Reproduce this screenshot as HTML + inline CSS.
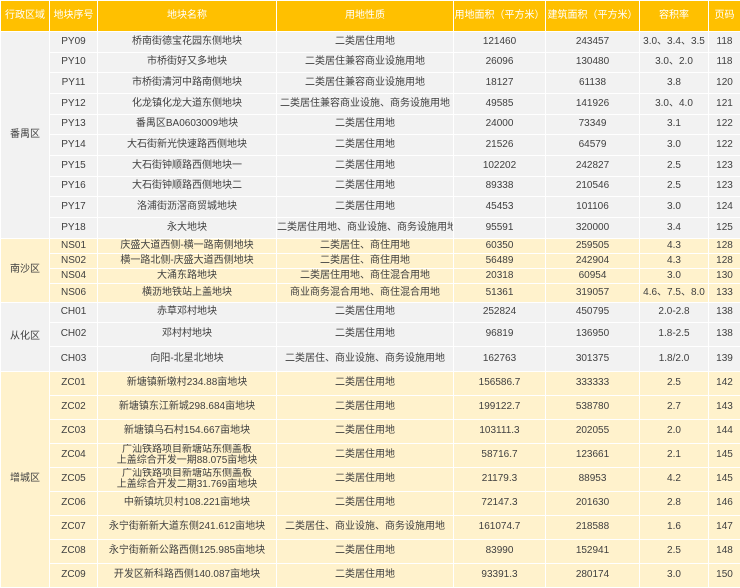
<!DOCTYPE html>
<html><head><meta charset="utf-8"><style>
body{margin:0;width:740px;height:586px;overflow:hidden;background:#fff;}
table{border-collapse:collapse;table-layout:fixed;width:740px;font-family:"Liberation Sans","Noto Sans CJK SC",sans-serif;font-size:10px;color:#404040;}
td,th{border:1px solid #fff;padding:0;text-align:center;white-space:nowrap;overflow:hidden;line-height:10.5px;}
th{background:#FFC000;color:#fff;font-weight:normal;height:30px;font-size:10px;}
.g td{background:#F2F2F2;}
.y td{background:#FFF2CC;}
</style></head><body>
<table>
<colgroup><col style="width:49px"><col style="width:48px"><col style="width:179px"><col style="width:177px"><col style="width:92px"><col style="width:94px"><col style="width:69px"><col style="width:32px"></colgroup>
<tr><th>行政区域</th><th>地块序号</th><th>地块名称</th><th>用地性质</th><th>用地面积（平方米）</th><th>建筑面积（平方米）</th><th>容积率</th><th>页码</th></tr>
<tbody class="g">
<tr style="height:21px"><td rowspan="10">番禺区</td><td>PY09</td><td>桥南街德宝花园东侧地块</td><td>二类居住用地</td><td>121460</td><td>243457</td><td>3.0、3.4、3.5</td><td>118</td></tr>
<tr style="height:20px"><td>PY10</td><td>市桥街好又多地块</td><td>二类居住兼容商业设施用地</td><td>26096</td><td>130480</td><td>3.0、2.0</td><td>118</td></tr>
<tr style="height:21px"><td>PY11</td><td>市桥街清河中路南侧地块</td><td>二类居住兼容商业设施用地</td><td>18127</td><td>61138</td><td>3.8</td><td>120</td></tr>
<tr style="height:21px"><td>PY12</td><td>化龙镇化龙大道东侧地块</td><td>二类居住兼容商业设施、商务设施用地</td><td>49585</td><td>141926</td><td>3.0、4.0</td><td>121</td></tr>
<tr style="height:20px"><td>PY13</td><td>番禺区BA0603009地块</td><td>二类居住用地</td><td>24000</td><td>73349</td><td>3.1</td><td>122</td></tr>
<tr style="height:21px"><td>PY14</td><td>大石街新光快速路西侧地块</td><td>二类居住用地</td><td>21526</td><td>64579</td><td>3.0</td><td>122</td></tr>
<tr style="height:21px"><td>PY15</td><td>大石街钟顺路西侧地块一</td><td>二类居住用地</td><td>102202</td><td>242827</td><td>2.5</td><td>123</td></tr>
<tr style="height:20px"><td>PY16</td><td>大石街钟顺路西侧地块二</td><td>二类居住用地</td><td>89338</td><td>210546</td><td>2.5</td><td>123</td></tr>
<tr style="height:21px"><td>PY17</td><td>洛浦街沥滘商贸城地块</td><td>二类居住用地</td><td>45453</td><td>101106</td><td>3.0</td><td>124</td></tr>
<tr style="height:21px"><td>PY18</td><td>永大地块</td><td>二类居住用地、商业设施、商务设施用地</td><td>95591</td><td>320000</td><td>3.4</td><td>125</td></tr>
</tbody>
<tbody class="y">
<tr style="height:15px"><td rowspan="4">南沙区</td><td>NS01</td><td>庆盛大道西侧-横一路南侧地块</td><td>二类居住、商住用地</td><td>60350</td><td>259505</td><td>4.3</td><td>128</td></tr>
<tr style="height:15px"><td>NS02</td><td>横一路北侧-庆盛大道西侧地块</td><td>二类居住、商住用地</td><td>56489</td><td>242904</td><td>4.3</td><td>128</td></tr>
<tr style="height:15px"><td>NS04</td><td>大涌东路地块</td><td>二类居住用地、商住混合用地</td><td>20318</td><td>60954</td><td>3.0</td><td>130</td></tr>
<tr style="height:19px"><td>NS06</td><td>横沥地铁站上盖地块</td><td>商业商务混合用地、商住混合用地</td><td>51361</td><td>319057</td><td>4.6、7.5、8.0</td><td>133</td></tr>
</tbody>
<tbody class="g">
<tr style="height:20px"><td rowspan="3">从化区</td><td>CH01</td><td>赤草邓村地块</td><td>二类居住用地</td><td>252824</td><td>450795</td><td>2.0-2.8</td><td>138</td></tr>
<tr style="height:24px"><td>CH02</td><td>邓村村地块</td><td>二类居住用地</td><td>96819</td><td>136950</td><td>1.8-2.5</td><td>138</td></tr>
<tr style="height:25px"><td>CH03</td><td>向阳-北星北地块</td><td>二类居住、商业设施、商务设施用地</td><td>162763</td><td>301375</td><td>1.8/2.0</td><td>139</td></tr>
</tbody>
<tbody class="y">
<tr style="height:24px"><td rowspan="9">增城区</td><td>ZC01</td><td>新塘镇新墩村234.88亩地块</td><td>二类居住用地</td><td>156586.7</td><td>333333</td><td>2.5</td><td>142</td></tr>
<tr style="height:24px"><td>ZC02</td><td>新塘镇东江新城298.684亩地块</td><td>二类居住用地</td><td>199122.7</td><td>538780</td><td>2.7</td><td>143</td></tr>
<tr style="height:24px"><td>ZC03</td><td>新塘镇乌石村154.667亩地块</td><td>二类居住用地</td><td>103111.3</td><td>202055</td><td>2.0</td><td>144</td></tr>
<tr style="height:24px"><td>ZC04</td><td>广汕铁路项目新塘站东侧盖板<br>上盖综合开发一期88.075亩地块</td><td>二类居住用地</td><td>58716.7</td><td>123661</td><td>2.1</td><td>145</td></tr>
<tr style="height:24px"><td>ZC05</td><td>广汕铁路项目新塘站东侧盖板<br>上盖综合开发二期31.769亩地块</td><td>二类居住用地</td><td>21179.3</td><td>88953</td><td>4.2</td><td>145</td></tr>
<tr style="height:24px"><td>ZC06</td><td>中新镇坑贝村108.221亩地块</td><td>二类居住用地</td><td>72147.3</td><td>201630</td><td>2.8</td><td>146</td></tr>
<tr style="height:24px"><td>ZC07</td><td>永宁街新新大道东侧241.612亩地块</td><td>二类居住、商业设施、商务设施用地</td><td>161074.7</td><td>218588</td><td>1.6</td><td>147</td></tr>
<tr style="height:24px"><td>ZC08</td><td>永宁街新新公路西侧125.985亩地块</td><td>二类居住用地</td><td>83990</td><td>152941</td><td>2.5</td><td>148</td></tr>
<tr style="height:24px"><td>ZC09</td><td>开发区新科路西侧140.087亩地块</td><td>二类居住用地</td><td>93391.3</td><td>280174</td><td>3.0</td><td>150</td></tr>
</tbody>
</table>
</body></html>
